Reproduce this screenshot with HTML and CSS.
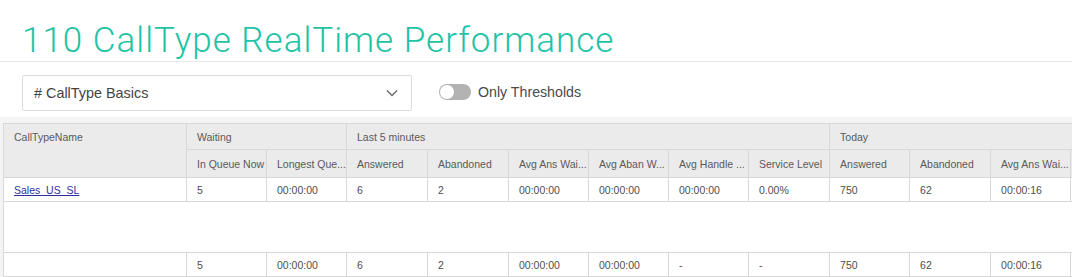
FILE: index.html
```html
<!DOCTYPE html>
<html>
<head>
<meta charset="utf-8">
<link rel="stylesheet" href="styles.css">
</head>
<body>
<header class="title-bar">
  <h1 class="title">110 CallType RealTime Performance</h1>
</header>
<div class="toolbar">
  <div class="select">
    <span class="select-label"># CallType Basics</span>
    <svg class="chevron" width="12" height="8" viewBox="0 0 12 8"><path d="M1 1.5 L6 6.5 L11 1.5" fill="none" stroke="#666" stroke-width="1.3"/></svg>
  </div>
  <label class="toggle-wrap">
    <span class="toggle"><span class="knob"></span></span>
    <span class="toggle-label">Only Thresholds</span>
  </label>
</div>
<div class="grid-area">
  <table class="grid">
    <colgroup>
      <col class="c-name"><col class="c80"><col class="c80"><col class="c81"><col class="c81"><col class="c80"><col class="c80"><col class="c80"><col class="c81"><col class="c80"><col class="c81"><col class="c80"><col class="c-rest">
    </colgroup>
    <thead>
      <tr class="h1">
        <th rowspan="2" class="name-h">CallTypeName</th>
        <th colspan="2">Waiting</th>
        <th colspan="6">Last 5 minutes</th>
        <th colspan="5">Today</th>
      </tr>
      <tr class="h2">
        <th>In Queue Now</th>
        <th>Longest Que...</th>
        <th>Answered</th>
        <th>Abandoned</th>
        <th>Avg Ans Wai...</th>
        <th>Avg Aban W...</th>
        <th>Avg Handle ...</th>
        <th>Service Level</th>
        <th>Answered</th>
        <th>Abandoned</th>
        <th>Avg Ans Wai...</th>
        <th></th>
      </tr>
    </thead>
    <tbody>
      <tr class="data">
        <td><a href="#" class="link">Sales_US_SL</a></td>
        <td>5</td><td>00:00:00</td><td>6</td><td>2</td><td>00:00:00</td><td>00:00:00</td><td>00:00:00</td><td>0.00%</td><td>750</td><td>62</td><td>00:00:16</td><td></td>
      </tr>
      <tr class="spacer"><td colspan="13"></td></tr>
      <tr class="data footer">
        <td></td>
        <td>5</td><td>00:00:00</td><td>6</td><td>2</td><td>00:00:00</td><td>00:00:00</td><td>-</td><td>-</td><td>750</td><td>62</td><td>00:00:16</td><td></td>
      </tr>
    </tbody>
  </table>
</div>
</body>
</html>
```

FILE: styles.css
```css
html, body {
  margin: 0;
  padding: 0;
  background: #ffffff;
  overflow: hidden;
}
body {
  width: 1072px;
  height: 277px;
  font-family: "Liberation Sans", Arial, sans-serif;
}
.title-bar {
  height: 62px;
  border-bottom: 1px solid #e8e8e8;
  box-sizing: border-box;
  padding-left: 22px;
  display: flex;
  align-items: flex-end;
}
.title {
  margin: 0;
  font-family: Roboto, sans-serif;
  font-weight: 300;
  font-size: 35px;
  line-height: 40px;
  color: #1ec3a6;
  letter-spacing: 1px;
}
.toolbar {
  height: 55px;
  box-sizing: border-box;
  padding: 13px 0 0 22px;
  display: flex;
  align-items: flex-start;
  gap: 27px;
}
.select {
  width: 390px;
  height: 36px;
  box-sizing: border-box;
  border: 1px solid #dcdcdc;
  border-radius: 2px;
  display: flex;
  align-items: center;
  justify-content: space-between;
  padding: 0 13px 0 11px;
}
.select-label {
  font-size: 14.4px;
  color: #444;
}
.chevron { display: block; }
.toggle-wrap {
  display: flex;
  align-items: center;
  gap: 7px;
  margin-top: 9px;
}
.toggle {
  width: 32px;
  height: 16px;
  border-radius: 8px;
  background: #b3b3b3;
  position: relative;
  display: block;
}
.knob {
  position: absolute;
  left: 1px;
  top: 1px;
  width: 14px;
  height: 14px;
  border-radius: 50%;
  background: #ffffff;
}
.toggle-label {
  font-size: 14.2px;
  color: #4a4a4a;
}
.grid-area {
  background: #f4f4f4;
  height: 160px;
  padding: 6px 0 0 3px;
  overflow: hidden;
}
.grid {
  border-collapse: collapse;
  table-layout: fixed;
  width: 1109px;
  font-size: 10.5px;
  background: #ffffff;
}
.c-name { width: 183px; }
.c80 { width: 80px; }
.c81 { width: 81px; }
.c-rest { width: 40px; }
.grid th, .grid td {
  border: 1px solid #d8d8d8;
  padding: 0 10px;
  text-align: left;
  white-space: nowrap;
  overflow: hidden;
}
.grid th {
  background: #ebebeb;
  color: #5a5a5a;
  font-weight: normal;
}
.h1 th { height: 25px; }
.h2 th { height: 27px; }
.name-h { vertical-align: top; padding-top: 7px !important; }
.grid td {
  color: #4e4e4e;
  height: 23px;
}
.link {
  color: #30309e;
  text-decoration: underline;
}
.spacer td {
  height: 50px;
  border-left: 1px solid #d8d8d8;
  border-right: none;
}
```
